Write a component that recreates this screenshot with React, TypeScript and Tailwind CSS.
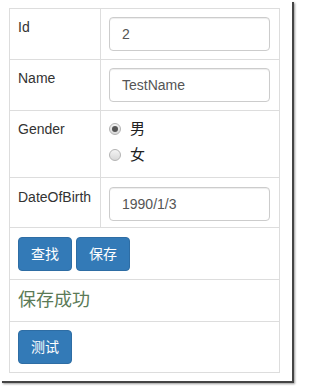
import React from 'react'

const FONT = { fontFamily: '"Liberation Sans", "Noto Sans CJK SC", sans-serif' }

function Radio({ checked, label }: { checked?: boolean; label: string }) {
  return (
    <label className="flex items-center h-5 gap-[9px]">
      <span className="w-[12px] h-[12px] rounded-full border border-[#b4b4b4] bg-gradient-to-b from-[#f4f4f4] to-[#d8d8d8] flex items-center justify-center">
        {checked && <span className="w-[6px] h-[6px] rounded-full bg-[#555]" />}
      </span>
      <span className="text-[15px] text-[#222]">{label}</span>
    </label>
  )
}

function Input({ value }: { value: string }) {
  return (
    <div className="h-[34px] w-[161px] rounded border border-[#ccc] px-3 flex items-center text-[14px] text-[#555] shadow-[inset_0_1px_1px_rgba(0,0,0,0.075)]">
      {value}
    </div>
  )
}

function Btn({ children }: { children: React.ReactNode }) {
  return (
    <button className="h-[34px] px-3 rounded border border-[#2e6da4] bg-[#337ab7] text-white text-[14px]">
      {children}
    </button>
  )
}

export default function App() {
  const td = 'border border-[#ddd] p-2 align-top'
  return (
    <div className="w-[297px] h-[387px] bg-white" style={FONT}>
      <div className="w-[292px] h-[381px] bg-white pt-2 pl-[9px] shadow-[2px_2px_0_#444,3px_3px_2px_#999]">
        <table className="border-collapse text-[14px] text-[#333] leading-5">
          <tbody>
            <tr>
              <td className={`${td} w-[91px]`}>Id</td>
              <td className={`${td} w-[179px]`}><Input value="2" /></td>
            </tr>
            <tr>
              <td className={td}>Name</td>
              <td className={td}><Input value="TestName" /></td>
            </tr>
            <tr>
              <td className={td}>Gender</td>
              <td className={td}>
                <div className="h-[50px] flex flex-col gap-[6px]">
                  <Radio checked label="男" />
                  <Radio label="女" />
                </div>
              </td>
            </tr>
            <tr>
              <td className={`${td} pt-[9px]`}>DateOfBirth</td>
              <td className={`${td} pt-[9px] pb-[6px]`}><Input value="1990/1/3" /></td>
            </tr>
            <tr>
              <td colSpan={2} className={`${td} pt-[9px]`}>
                <div className="flex gap-1">
                  <Btn>查找</Btn>
                  <Btn>保存</Btn>
                </div>
              </td>
            </tr>
            <tr>
              <td colSpan={2} className={td}>
                <div className="h-[25px] text-[18px] leading-[25px] text-[#5a7a56]">保存成功</div>
              </td>
            </tr>
            <tr>
              <td colSpan={2} className={td}>
                <Btn>测试</Btn>
              </td>
            </tr>
          </tbody>
        </table>
      </div>
    </div>
  )
}
